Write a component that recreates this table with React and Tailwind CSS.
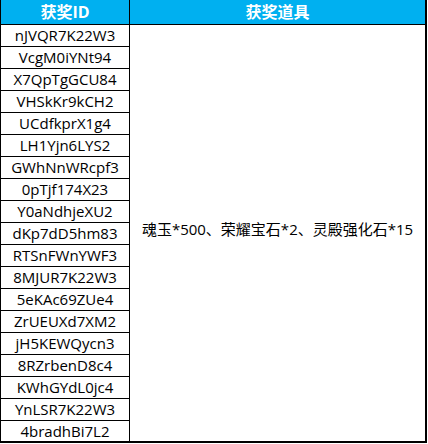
import React from 'react';

const ids = [
  'nJVQR7K22W3',
  'VcgM0iYNt94',
  'X7QpTgGCU84',
  'VHSkKr9kCH2',
  'UCdfkprX1g4',
  'LH1Yjn6LYS2',
  'GWhNnWRcpf3',
  '0pTjf174X23',
  'Y0aNdhjeXU2',
  'dKp7dD5hm83',
  'RTSnFWnYWF3',
  '8MJUR7K22W3',
  '5eKAc69ZUe4',
  'ZrUEUXd7XM2',
  'jH5KEWQycn3',
  '8RZrbenD8c4',
  'KWhGYdL0jc4',
  'YnLSR7K22W3',
  '4bradhBi7L2',
];

const App = () => {
  return (
    <div className="w-[428px] h-[444px] bg-white">
      <div
        className="w-[427px] border-l border-r-2 border-b-2 border-black text-black"
        style={{ fontFamily: '"Open Sans", "Noto Sans CJK SC", sans-serif' }}
      >
        {/* Header */}
        <div className="flex h-[25px] bg-[#00b0f0] border-b border-black text-white font-bold text-[16px]">
          <div className="w-[129px] border-r border-black flex items-center justify-center">获奖ID</div>
          <div className="flex-1 flex items-center justify-center">获奖道具</div>
        </div>

        {/* Body */}
        <div className="flex">
          <div className="w-[129px] border-r border-black">
            {ids.map((id, i) => (
              <div
                key={id}
                className={
                  i === ids.length - 1
                    ? 'h-[20px] flex items-center justify-center text-[15px]'
                    : 'h-[22px] border-b border-black flex items-center justify-center text-[15px]'
                }
              >
                {id}
              </div>
            ))}
          </div>
          <div className="flex-1 flex items-center justify-center text-[15px] pb-[8px]">
            魂玉*500、荣耀宝石*2、灵殿强化石*15
          </div>
        </div>
      </div>
    </div>
  );
};

export default App;
